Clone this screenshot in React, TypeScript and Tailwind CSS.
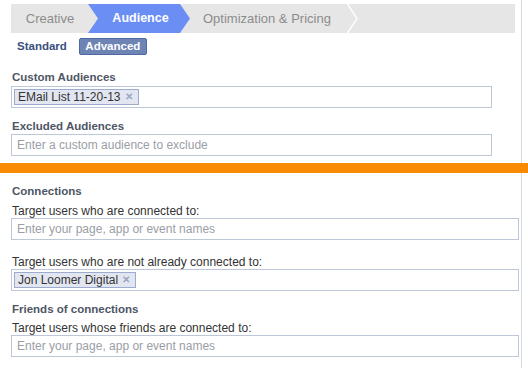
import { FC } from "react";

const font = { fontFamily: '"Liberation Sans", Arial, sans-serif' };

const Label: FC<{ text: string }> = ({ text }) => (
  <p className="pl-px text-[11.5px] font-bold leading-[14px] text-[#4e5665]">{text}</p>
);

const Caption: FC<{ text: string }> = ({ text }) => (
  <p className="pl-px text-[12px] leading-[14px] text-[#333]">{text}</p>
);

const Token: FC<{ text: string }> = ({ text }) => (
  <span className="ml-[2px] mt-[2px] flex h-[16px] items-center gap-[4px] border border-[#9dacce] bg-[#e2e6f0] pl-[3px] pr-[5px] text-[12px] leading-none text-[#333]">
    {text}
    <span className="text-[10px] font-bold text-[#98a5c2]">✕</span>
  </span>
);

const Field: FC<{ width: string; placeholder?: string; token?: string }> = ({
  width,
  placeholder,
  token,
}) => (
  <div
    className={`flex h-[22px] items-start border border-[#bdc7d8] bg-white ${width}`}
  >
    {token ? (
      <Token text={token} />
    ) : (
      <span className="pl-[5px] text-[12px] leading-[20px] text-[#9a9ea6]">
        {placeholder}
      </span>
    )}
  </div>
);

const Separator: FC = () => (
  <svg width="11" height="29" viewBox="0 0 11 29" className="shrink-0">
    <polyline points="0.5,0 10,14.5 0.5,29" fill="none" stroke="#ffffff" strokeWidth="1.4" />
  </svg>
);

const Tabs: FC = () => (
  <div className="ml-[11px] flex h-[29px] w-[504px] items-stretch bg-[#e6e6e6] text-[13px]">
    <div className="flex w-[77px] items-center justify-center pl-[1px] text-[#8c8c8c]">
      Creative
    </div>
    <div className="flex w-[102px] items-center justify-center bg-[#6b8ef4] pl-[3px] text-[12.5px] font-bold text-white [clip-path:polygon(0_0,92px_0,100%_50%,92px_100%,0_100%,10px_50%)]">
      Audience
    </div>
    <div className="flex w-[157px] items-center pl-[13px] text-[#8c8c8c]">
      Optimization &amp; Pricing
    </div>
    <Separator />
  </div>
);

export default function App() {
  return (
    <div className="h-[368px] w-[528px] overflow-hidden bg-white" style={font}>
      <div className="h-[163px] w-[522px] border-r border-[#d9d9e3] pt-[4px]">
        <Tabs />
        <div className="mt-[5px] flex h-[17px] items-center pl-[17px]">
          <span className="text-[11.5px] font-bold text-[#3b4f80]">Standard</span>
          <span className="ml-[12px] flex h-[17px] w-[68px] items-center justify-center rounded-[2px] border border-[#4f6aa3] bg-[#6d84b4] text-[11.5px] font-bold text-white">
            Advanced
          </span>
        </div>
        <div className="flex flex-col pl-[11px]">
          <div className="mt-[15px]">
            <Label text="Custom Audiences" />
          </div>
          <div className="mt-[2px]">
            <Field width="w-[481px]" token="EMail List 11-20-13" />
          </div>
          <div className="mt-[11px]">
            <Label text="Excluded Audiences" />
          </div>
          <div className="mt-[1px]">
            <Field width="w-[481px]" placeholder="Enter a custom audience to exclude" />
          </div>
        </div>
      </div>
      <div className="h-[10px] w-full bg-[#f98a04]" />
      <div className="h-[195px] w-[522px] border-r border-[#d9d9e3] pl-[11px]">
        <div className="pt-[11px]">
          <Label text="Connections" />
        </div>
        <div className="mt-[6px]">
          <Caption text="Target users who are connected to:" />
        </div>
        <Field width="w-[508px]" placeholder="Enter your page, app or event names" />
        <div className="mt-[15px]">
          <Caption text="Target users who are not already connected to:" />
        </div>
        <Field width="w-[508px]" token="Jon Loomer Digital" />
        <div className="mt-[11px]">
          <Label text="Friends of connections" />
        </div>
        <div className="mt-[5px]">
          <Caption text="Target users whose friends are connected to:" />
        </div>
        <Field width="w-[508px]" placeholder="Enter your page, app or event names" />
      </div>
    </div>
  );
}
